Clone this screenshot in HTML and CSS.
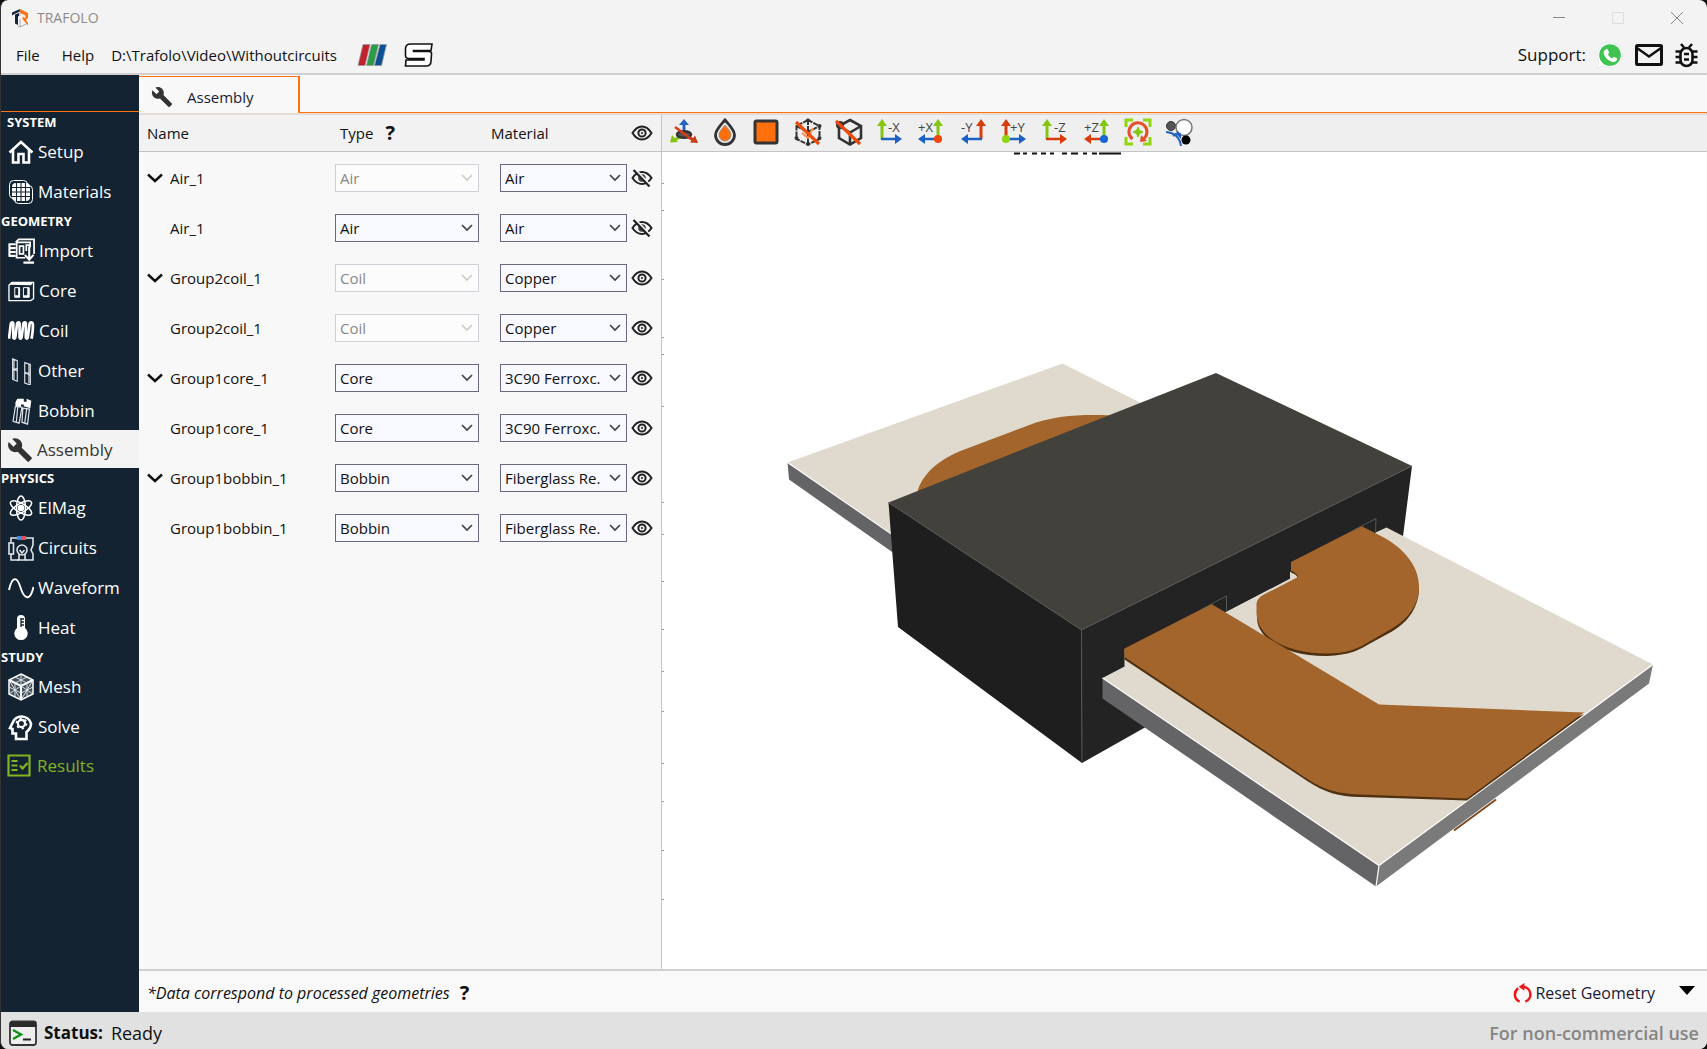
FILE: index.html
```html
<!DOCTYPE html>
<html lang="en">
<head>
<meta charset="utf-8">
<title>TRAFOLO</title>
<link rel="stylesheet" href="styles.css">
</head>
<body>
<svg class="defs" aria-hidden="true">
  <symbol id="eye" viewBox="0 0 22 16"><path d="M1.500 8Q5.500 1.500 11 1.500T20.500 8Q16.500 14.500 11 14.500T1.500 8Z" fill="none" stroke="#222" stroke-width="2"/><circle cx="11" cy="8" r="3.600" fill="none" stroke="#222" stroke-width="2"/><circle cx="11" cy="8" r="1.200" fill="#555"/></symbol>
  <symbol id="eye-off" viewBox="0 0 22 18"><path d="M1.500 9Q5.500 3 11 3T20.500 9Q16.500 15 11 15T1.500 9Z" fill="none" stroke="#222" stroke-width="2"/><circle cx="11" cy="9" r="3.800" fill="#444"/><path d="M4 0 20 17" stroke="#f8f8f8" stroke-width="2"/><path d="M2.500 1 18.500 17.500" stroke="#222" stroke-width="2.200"/></symbol>
  <symbol id="chev" viewBox="0 0 16 10"><path d="M1 1.500 8 8 15 1.500" fill="none" stroke="#111" stroke-width="2.400"/></symbol>
  <symbol id="wrench" viewBox="0 0 24 24"><path d="M22.700 19l-9.100-9.100c.9-2.300.4-5-1.500-6.900-2-2-5-2.400-7.400-1.300L9 6 6 9 1.600 4.700C.4 7.100.9 10.100 2.900 12.100c1.900 1.900 4.600 2.400 6.900 1.500l9.100 9.100c.4.4 1 .4 1.400 0l2.300-2.300c.5-.4.5-1.100.1-1.400z" fill="#333"/></symbol>
</svg>
<div class="window">
  <header class="titlebar">
    <svg class="logo" viewBox="0 0 18 20"><path d="M1 4.500 9 1v2.500L3.500 6 1 7.500zM4 6.500l4-1.500v3L7 8.500V17l-3-1.500z" fill="#14233a"/><path d="M9 1 17 5v5l-2 2 2 3v2.500L11.500 11V9l3 1V7.500L9 5z" fill="#ff7210"/><path d="M9 1v7M9 11v8l7-3.500M7 18l2 1" fill="none" stroke="#999" stroke-width=".8"/></svg>
    <h1>TRAFOLO</h1>
    <div class="caption">
      <button aria-label="Minimize"><svg viewBox="0 0 12 12"><path d="M0 5.500h12" stroke="#888"/></svg></button>
      <button aria-label="Maximize" disabled><svg viewBox="0 0 12 12"><path d="M.5.500h11v11H.5z" fill="none" stroke="#ddd"/></svg></button>
      <button aria-label="Close"><svg viewBox="0 0 12 12"><path d="M0 0l12 12M12 0 0 12" stroke="#888"/></svg></button>
    </div>
  </header>
  <nav class="menubar">
    <button>File</button>
    <button>Help</button>
    <span class="path">D:\Trafolo\Video\Withoutcircuits</span>
    <button class="brand" aria-label="ParaView"><svg width="30" height="22" viewBox="0 0 30 22"><g stroke="#9a9a9a" stroke-width=".8"><path d="M6 .5h7L8 21.500H1z" fill="#c2202c"/><path d="M14.500.500h7l-5 21h-7z" fill="#2b9b48"/><path d="M23 .5h6.500l-5 21h-7z" fill="#0b4f94"/></g></svg></button>
    <button class="brand" aria-label="Solver"><svg width="30" height="24" viewBox="0 0 30 24"><path d="M6.500 1H28l-1 6.500H9.500v1H25q3 0 2.500 3L27 18q0 5-5 5H1.500l.5-6h18v-1.500H5q-3.500 0-3.500-3V6q0-5 5-5z" fill="#fff" stroke="#111" stroke-width="1.600"/></svg></button>
    <span class="support">Support:</span>
    <a href="#whatsapp" aria-label="WhatsApp"><svg width="27" height="27" viewBox="0 0 27 27"><path d="M1 26 3 19A12.500 12.500 0 1 1 8 24z" fill="#fff" stroke="#dfe8e8" stroke-width=".8"/><circle cx="14" cy="13" r="10.800" fill="#3fc351"/><path d="M9.500 7.500q1.500-1.500 2.500.5l1 2.200q.2.800-1.200 2 1.500 3 4.500 4.300 1.200-2 2-1.600l2.300 1.100q1 .5.500 1.700-1.300 2.800-4.300 2.300-6.500-1.300-9-7.800-.8-2.900 1.700-4.700z" fill="#fff"/></svg></a>
    <a href="#mail" aria-label="Mail"><svg width="28" height="22" viewBox="0 0 28 22"><rect x="1.500" y="1.500" width="25" height="19" rx="1" fill="none" stroke="#111" stroke-width="3"/><path d="M2 4l12 8.500L26 4" fill="none" stroke="#111" stroke-width="2.400"/></svg></a>
    <a href="#bug" aria-label="Report a bug"><svg width="23" height="25" viewBox="0 0 23 25"><rect x="5.500" y="5" width="12" height="18" rx="6" fill="none" stroke="#111" stroke-width="2.600"/><path d="M6 1l3 3.500M17 1l-3 3.500M.5 8.500H6M.5 14H5.500M.5 19.500H6M17 8.500h5.500M17.500 14h5M17 19.500h5.500M9 11h5M9 16.500h5" stroke="#111" stroke-width="2.500"/></svg></a>
  </nav>
  <div class="body">
    <nav class="sidebar">
      <div class="side-top"></div>
      <h2 class="first">SYSTEM</h2>
      <a href="#setup"><svg viewBox="0 0 26 26"><path d="M1.500 13.500 13 3l11.500 10.500M5 11v12.500h5.500V15h5v8.500H21V11" fill="none" stroke="#fff" stroke-width="2.600"/></svg>Setup</a>
      <a href="#materials"><svg viewBox="0 0 26 26"><g fill="none" stroke="#fff"><rect x="1.500" y="1.500" width="18" height="18" rx="4"/><rect x="6.500" y="6.500" width="18" height="18" rx="4"/></g><rect x="4" y="4" width="18" height="18" rx="4" fill="#fff"/><path d="M8.500 4v18M13 4v18M17.500 4v18M4 8.500h18M4 13h18M4 17.500h18" stroke="#132332" stroke-width="1.100"/></svg>Materials</a>
      <h2>GEOMETRY</h2>
      <a href="#import"><svg class="wide" viewBox="0 0 28 26"><g fill="none" stroke="#fff" stroke-width="1.800"><path d="M8 4 11 1h16v15M8 4h15v5M8 20h10M9 4v16M12 8h4v8h-4zM19 13V7h4"/><path d="M1 6h7M1 10h7M1 14h7M1 18h7M1.500 5v14" stroke-width="2.200"/><path d="M22 8v13M17.500 17l4.500 5 4.500-5M16 25h11" stroke-width="2.200"/></g></svg>Import</a>
      <a href="#core"><svg class="wide" viewBox="0 0 28 26"><path d="M1 23V7l3-3h22.500v17l-3 2z" fill="none" stroke="#fff" stroke-width="1.400"/><path d="M1.500 6.500 4 4h22l-2 3z" fill="#fff"/><path d="M7 9.500h5v10H7zM16 9.500h6v10h-6z" fill="none" stroke="#fff"/><path d="M10.500 9.500h2v10H7v-2h3.500zM20 9.500h2v10h-6v-2h4z" fill="#fff"/></svg>Core</a>
      <a href="#coil"><svg class="wide" viewBox="0 0 28 26"><path d="M1 21 3 5q2-2 2.500 0L5.500 20q1 2 2 0L9.500 5q2-2 2.500 0l0 15q1 2 2 0L16 5q2-2 2.500 0l0 15q1 2 2 0L22.500 5q2-2 3 0 1 3-1 16" fill="none" stroke="#fff" stroke-width="2.800"/></svg>Coil</a>
      <a href="#other"><svg viewBox="0 0 26 30"><path d="M4 2l5 2v22l-5-2zM17 6l6 2v22l-6-2zM4 14l5-2M4 12l5 3M17 18l6-2M17 16l6 4M5.500 3v21M21.500 8v20" fill="none" stroke="#dfe4e8" stroke-width="1.200"/></svg>Other</a>
      <a href="#bobbin"><svg viewBox="0 0 26 30"><path d="M7 10 14 11 11 28 4.500 26zM15 12l7 1-2 16-6-2zM9.500 11 8 27M19 13l-2 15" fill="none" stroke="#dfe4e8" stroke-width="1.300"/><path d="M7 6 9 2h7v3h3V2l5 2-1 8-7-2V8h-3v3L7 9z" fill="#fff"/></svg>Bobbin</a>
      <a href="#assembly" class="active"><svg><use href="#wrench"/></svg>Assembly</a>
      <h2>PHYSICS</h2>
      <a href="#elmag"><svg viewBox="0 0 26 26"><g fill="none" stroke="#fff" stroke-width="1.500"><ellipse cx="13" cy="13" rx="4.500" ry="12"/><ellipse cx="13" cy="13" rx="4.500" ry="12" transform="rotate(60 13 13)"/><ellipse cx="13" cy="13" rx="4.500" ry="12" transform="rotate(120 13 13)"/></g><circle cx="13" cy="13" r="3.300" fill="#fff"/></svg>ElMag</a>
      <a href="#circuits"><svg viewBox="0 0 26 26"><g fill="none" stroke="#dfe4e8" stroke-width="1.600"><path d="M3 8V3h6M18 3h7v7l-2 5 2 4v6h-7M3 19v6h8"/><rect x="1" y="8" width="4.500" height="11"/><circle cx="14" cy="15" r="5"/><path d="M11 25v-6M17 25v-6M11.500 15l2.500 3 2.500-3M9 25h10"/></g><path d="M9 1h5v4H9z" fill="#3b8ae6"/><path d="M14 1h4v4h-4z" fill="#ee4a56"/></svg>Circuits</a>
      <a href="#waveform"><svg viewBox="0 0 26 26"><path d="M1 15C4 1 9 1 12.500 12.500S22 27 25.500 12" fill="none" stroke="#fff" stroke-width="1.900"/></svg>Waveform</a>
      <a href="#heat"><svg viewBox="0 0 26 26"><path d="M9 4a4 4 0 0 1 8 0v9a6.700 6.700 0 1 1-8 0z" fill="#fff"/><path d="M13 3v9M13 4h3M13 7h3M13 10h3" stroke="#132332" stroke-width="1.300"/></svg>Heat</a>
      <h2>STUDY</h2>
      <a href="#mesh"><svg viewBox="0 0 26 28"><path d="M13 1 25 7v14l-12 6L1 21V7z" fill="#46535f" stroke="#fff" stroke-width="1.500"/><path d="M1 7l12 6 12-6M13 13v14" fill="none" stroke="#fff" stroke-width="2"/><path d="M7 4l12 6M19 4 7 10M13 1v12M1 14l12 6 12-6M7 10v14M19 10v14M1 21 13 13l12 8M1 7l12 20L25 7" fill="none" stroke="#e8ecef" stroke-width=".9"/></svg>Mesh</a>
      <a href="#solve"><svg viewBox="0 0 26 28"><path d="M9 27v-5.500H5.500V17L3 16l2.500-5A9.700 9.700 0 0 1 24 11.500q0 5-4.500 8.500v7z" fill="none" stroke="#fff" stroke-width="2.600" transform="translate(-1 -1)"/><circle cx="13.500" cy="10.500" r="3.600" fill="none" stroke="#fff" stroke-width="2.200"/><circle cx="13.500" cy="10.500" r="5" fill="none" stroke="#fff" stroke-width="1.800" stroke-dasharray="2.200 3.036"/></svg>Solve</a>
      <a href="#results" class="results"><svg viewBox="0 0 26 26"><path d="M1.500 2.500h21v20h-21z" fill="none" stroke="#85b320" stroke-width="2.200"/><path d="M4.500 8h6M4.500 12.500h6M4.500 17h6M13 12.500l2.500 3 5-5.500" fill="none" stroke="#85b320" stroke-width="2.200"/></svg>Results</a>
    </nav>
    <main class="content">
      <div class="tabs">
        <button class="tab"><svg><use href="#wrench"/></svg>Assembly</button>
        <div class="tab-rest"></div>
      </div>
      <div class="work">
        <section class="panel">
          <table>
            <colgroup><col class="c-name"><col class="c-type"><col class="c-mat"><col class="c-eye"><col></colgroup>
            <thead><tr><th class="name">Name</th><th class="type"><div class="with-help">Type<button class="help" aria-label="Help on types">?</button></div></th><th class="mat">Material</th><th class="vis"><button aria-label="Toggle all"><svg class="eye"><use href="#eye"/></svg></button></th><th></th></tr></thead>
            <tbody>
              <tr><td><div class="node"><button class="toggle" aria-label="Collapse"><svg><use href="#chev"/></svg></button>Air_1</div></td><td><select disabled aria-label="Type"><option>Air</option></select></td><td class="mat"><select aria-label="Material"><option>Air</option></select></td><td class="vis"><button aria-label="Show"><svg class="eye off"><use href="#eye-off"/></svg></button></td><td></td></tr>
              <tr><td><div class="node leaf">Air_1</div></td><td><select aria-label="Type"><option>Air</option></select></td><td class="mat"><select aria-label="Material"><option>Air</option></select></td><td class="vis"><button aria-label="Show"><svg class="eye off"><use href="#eye-off"/></svg></button></td><td></td></tr>
              <tr><td><div class="node"><button class="toggle" aria-label="Collapse"><svg><use href="#chev"/></svg></button>Group2coil_1</div></td><td><select disabled aria-label="Type"><option>Coil</option></select></td><td class="mat"><select aria-label="Material"><option>Copper</option></select></td><td class="vis"><button aria-label="Hide"><svg class="eye"><use href="#eye"/></svg></button></td><td></td></tr>
              <tr><td><div class="node leaf">Group2coil_1</div></td><td><select disabled aria-label="Type"><option>Coil</option></select></td><td class="mat"><select aria-label="Material"><option>Copper</option></select></td><td class="vis"><button aria-label="Hide"><svg class="eye"><use href="#eye"/></svg></button></td><td></td></tr>
              <tr><td><div class="node"><button class="toggle" aria-label="Collapse"><svg><use href="#chev"/></svg></button>Group1core_1</div></td><td><select aria-label="Type"><option>Core</option></select></td><td class="mat"><select aria-label="Material"><option>3C90 Ferroxc.</option></select></td><td class="vis"><button aria-label="Hide"><svg class="eye"><use href="#eye"/></svg></button></td><td></td></tr>
              <tr><td><div class="node leaf">Group1core_1</div></td><td><select aria-label="Type"><option>Core</option></select></td><td class="mat"><select aria-label="Material"><option>3C90 Ferroxc.</option></select></td><td class="vis"><button aria-label="Hide"><svg class="eye"><use href="#eye"/></svg></button></td><td></td></tr>
              <tr><td><div class="node"><button class="toggle" aria-label="Collapse"><svg><use href="#chev"/></svg></button>Group1bobbin_1</div></td><td><select aria-label="Type"><option>Bobbin</option></select></td><td class="mat"><select aria-label="Material"><option>Fiberglass Re.</option></select></td><td class="vis"><button aria-label="Hide"><svg class="eye"><use href="#eye"/></svg></button></td><td></td></tr>
              <tr><td><div class="node leaf">Group1bobbin_1</div></td><td><select aria-label="Type"><option>Bobbin</option></select></td><td class="mat"><select aria-label="Material"><option>Fiberglass Re.</option></select></td><td class="vis"><button aria-label="Hide"><svg class="eye"><use href="#eye"/></svg></button></td><td></td></tr>
            </tbody>
          </table>
        </section>
        <section class="viewer">
          <div class="toolbar"><div class="tools">
            <button aria-label="Axes"><svg viewBox="0 0 28 28"><path d="M14 15V5" stroke="#2463c0" stroke-width="3"/><path d="M14 1l5 6H9z" fill="#2463c0"/><path d="M12 18l-8 4" stroke="#84c510" stroke-width="3"/><path d="M16 18l8 4" stroke="#c23f1a" stroke-width="3"/><path d="M0 24.500 2 17l6 7z" fill="#84c510"/><path d="M28 25l-8-.5 5-7z" fill="#c23f1a"/><ellipse cx="14" cy="16.500" rx="7" ry="3.300" fill="#555" stroke="#333" stroke-width="2.500"/><path d="M5 9l19 14" stroke="#d93c16" stroke-width="2.500"/></svg></button>
            <button aria-label="Opacity"><svg viewBox="0 0 28 28"><path d="M14 2C9 8 4.500 12 4.500 17a9.500 9.500 0 0 0 19 0C23.500 12 19 8 14 2z" fill="#eee" stroke="#333" stroke-width="2.800"/><path d="M14 7c-3 4-6 6.500-6 10a6 6 0 0 0 12 0c0-3.500-3-6-6-10z" fill="#ff700d" stroke="#998a80"/></svg></button>
            <button aria-label="Surface"><svg viewBox="0 0 28 28"><rect x="3" y="3" width="22" height="22" rx="1.500" fill="#ff700d" stroke="#333" stroke-width="3"/></svg></button>
            <button aria-label="Hide mesh"><svg viewBox="0 0 28 28"><path d="M14 2 25.500 8v13L14 26.500 2.500 21V8zM2.500 8 14 14l11.500-6M14 14v12M14 2v12" fill="none" stroke="#333" stroke-width="2" stroke-dasharray="5 1"/><path d="M8 15l6 5 5-10" fill="none" stroke="#ff8c4a" stroke-width="2"/><g fill="#333"><circle cx="14" cy="2.500" r="2"/><circle cx="25.500" cy="8" r="2"/><circle cx="25.500" cy="20" r="2"/><circle cx="14" cy="26" r="2"/><circle cx="2.500" cy="20" r="2"/></g><path d="M2 4l23 22" stroke="#f04b0c" stroke-width="3.200"/></svg></button>
            <button aria-label="Hide box"><svg viewBox="0 0 28 28"><path d="M15 2 26 8v12l-11 6.500L4 20V8zM4 8l11 6.500L26 8M15 14.500V26" fill="none" stroke="#333" stroke-width="2.600"/><circle cx="5" cy="7" r="4" fill="#333"/><path d="M1 3l24 23" stroke="#f04b0c" stroke-width="3.200"/></svg></button>
            <button aria-label="View minus X"><svg viewBox="0 0 28 28"><path d="M6 21V7" stroke="#84c510" stroke-width="3"/><path d="M6 1l5 7H1z" fill="#84c510"/><path d="M5 21h14" stroke="#1d61c4" stroke-width="2.500"/><path d="M26 21l-7 5V16z" fill="#1d61c4"/><text x="12" y="14" class="ax">-X</text></svg></button>
            <button aria-label="View plus X"><svg viewBox="0 0 28 28"><path d="M21 21V7" stroke="#84c510" stroke-width="3"/><path d="M21 1l5 7H16z" fill="#84c510"/><path d="M21 21H8" stroke="#1d61c4" stroke-width="2.500"/><path d="M1 21l7 5V16z" fill="#1d61c4"/><circle cx="21" cy="21" r="4" fill="#f5460c"/><text x="1" y="14" class="ax">+X</text></svg></button>
            <button aria-label="View minus Y"><svg viewBox="0 0 28 28"><path d="M22 21V7" stroke="#d93c0c" stroke-width="3"/><path d="M22 1l5 7H17z" fill="#d93c0c"/><path d="M23 21H9" stroke="#1d61c4" stroke-width="2.500"/><path d="M2 21l7 5V16z" fill="#1d61c4"/><text x="2" y="14" class="ax">-Y</text></svg></button>
            <button aria-label="View plus Y"><svg viewBox="0 0 28 28"><path d="M6 21V7" stroke="#d93c0c" stroke-width="3"/><path d="M6 1l5 7H1z" fill="#d93c0c"/><path d="M6 21h13" stroke="#1d61c4" stroke-width="2.500"/><path d="M26 21l-7 5V16z" fill="#1d61c4"/><circle cx="6" cy="21" r="4" fill="#91d410"/><text x="10" y="14" class="ax">+Y</text></svg></button>
            <button aria-label="View minus Z"><svg viewBox="0 0 28 28"><path d="M6 21V7" stroke="#84c510" stroke-width="3"/><path d="M6 1l5 7H1z" fill="#84c510"/><path d="M5 21h14" stroke="#d93c0c" stroke-width="2.500"/><path d="M26 21l-7 5V16z" fill="#d93c0c"/><text x="13" y="14" class="ax">-Z</text></svg></button>
            <button aria-label="View plus Z"><svg viewBox="0 0 28 28"><path d="M21 21V7" stroke="#84c510" stroke-width="3"/><path d="M21 1l5 7H16z" fill="#84c510"/><path d="M21 21H8" stroke="#d93c0c" stroke-width="2.500"/><path d="M1 21l7 5V16z" fill="#d93c0c"/><circle cx="21" cy="21" r="4" fill="#1766d8"/><text x="1" y="14" class="ax">+Z</text></svg></button>
            <button aria-label="Reset view"><svg viewBox="0 0 28 28"><path d="M2 9V2h7M19 2h7v7M26 19v7h-7M9 26H2v-7" fill="none" stroke="#91d410" stroke-width="3"/><path d="M8.500 21a9 9 0 1 1 11.500-.5" fill="none" stroke="#e4502a" stroke-width="3"/><path d="M16 24l1-7 6 6z" fill="#e4502a"/><path d="M14 9l1.500 3.500L19 14l-3.500 1.500L14 19l-1.500-3.500L9 14l3.500-1.500z" fill="#84c510" stroke="#84c510"/></svg></button>
            <button aria-label="Section"><svg viewBox="0 0 28 28"><circle cx="6" cy="8" r="4.500" fill="#555" stroke="#333"/><circle cx="19" cy="9.500" r="8" fill="#fff" stroke="#777" stroke-width="1.500"/><circle cx="21" cy="22" r="4.500" fill="#000"/><path d="M1 14q13 1 15 14M8 18l6-4" fill="none" stroke="#2463c0" stroke-width="2"/><path d="M10 15h6v6z" fill="#2463c0"/></svg></button>
          </div></div>
          <svg class="scene" viewBox="662 151 1045 816" role="img" aria-label="Transformer assembly">
            <path d="M1014 152h6m3 0h4m5 0h5m4 0h5m4 0h4m8 0h5m4 0h7m5 0h4m5 0h5m2 0h22" stroke="#111" stroke-width="2" fill="none"/>
            <path d="M787.500 461 1062.500 362 1160 411 900 540z" fill="#e0dace"/>
            <path d="M787.500 461 900 538v18L789 478z" fill="#646467"/><path d="M787.500 461 895 535" stroke="#fff" stroke-width="1.200"/>
            <path d="M917.500 490C924 468 945 455 967 447L1028 424C1056 413 1085 413 1112 414L1080 440z" fill="#a3652b"/>
            <path d="M888.500 501 1081.500 628.500 1082 761.500 898 625.500z" fill="#1e1e1e"/>
            <path d="M1081.500 628.500 1412 464.500 1403 535 1300 600 1144 726.500 1082 761.500z" fill="#232323"/>
            <path d="M888.500 501 1216 371.500 1412 464.500 1081.500 628.500z" fill="#42413c"/>
            <path d="M888.500 501 1081.500 628.500 1412 464.500M1081.500 628.500 1082 761.500" fill="none" stroke="#555" stroke-width="1"/>
            <path d="M1102.500 676.500 1124.500 665V648L1226.500 610 1290 577V562L1375.500 531 1386.500 526 1653 663 1379 864z" fill="#e0dace"/>
            <path d="M1124.500 648V640L1226.500 590V610L1290 577V561L1376 517V531L1362 538 1291 570 1226 610z" fill="#232323"/>
            <path d="M1102.500 676.500 1379 864 1376 885 1102.500 697z" fill="#646467"/>
            <path d="M1379 864 1653 663 1649 682 1376 885z" fill="#7a7a7a"/>
            <path d="M1102.500 676.500 1379 864 1653 663M1379 864 1376 885" fill="none" stroke="#fff" stroke-width="1.200"/>
            <path d="M1291 563 1291 571Q1297 573 1298 577L1263 595Q1257 598 1257 604V618C1259 640 1290 655 1327 654.500 1350 653.500 1358 649 1370 642L1392 630C1409 620 1419 605 1419 586L1376 533z" fill="#4f3010"/>
            <path d="M1291 560.500 1361.500 524.500 1376 532C1400 543 1419 562 1419 585 1419 603 1409 617 1392 627L1366 642C1355 649 1342 652 1327 652 1290 652 1258 638 1256.500 612V602Q1257 597 1263 593.500L1298 575.500Q1297 571 1291 569z" fill="#a3652b"/>
            <path d="M1124.500 650V658L1308 780C1325 791 1338 795 1360 795.500L1467 799 1584 713 1467 750z" fill="#4f3010"/>
            <path d="M1124.500 647 1211.500 602.500 1379 703 1584 711 1467 797 1360 793C1338 792 1325 789 1308 778L1124.500 655.500z" fill="#a3652b"/>
            <path d="M1200 608.500 1226.500 594.500V610M1350 530.500 1376 517 1375.500 531" fill="none" stroke="#555"/>
            <path d="M1454 829 1496 798" stroke="#80481b" stroke-width="2"/>
            <path d="M662 182h2m-2 27h2m-2 69h2m-2 58h2m-2 17h2m-2 52h2m-2 96h2m-2 32h2m-2 47h2m-2 48h2m-2 42h2m-2 40h2m-2 52h2m-2 38h2m-2 49h2m-2 49h2" stroke="#999"/>
          </svg>
        </section>
      </div>
      <div class="actions">
        <p>*Data correspond to processed geometries</p><button class="help" aria-label="Help on data">?</button>
        <button class="reset"><svg viewBox="0 0 20 22"><path d="M7 19.500A8 8 0 0 1 5.500 5.500M13 19.500A8 8 0 0 0 11 4" fill="none" stroke="#f01414" stroke-width="2.600"/><path d="M12 0v8L6 4z" fill="#f01414"/></svg>Reset Geometry</button>
        <button class="more" aria-label="More"><svg viewBox="0 0 16 9"><path d="M0 0h16L8 9z"/></svg></button>
      </div>
    </main>
  </div>
  <footer class="status">
    <svg viewBox="0 0 28 26"><rect x="1" y="1.500" width="26" height="23.500" rx="2.500" fill="#eee" stroke="#333" stroke-width="1.800"/><path d="M1 2h26v5H1z" fill="#2b2b2b"/><path d="M4 10l8 4.500L4 19" fill="none" stroke="#109018" stroke-width="2.400"/><path d="M14 19.500h8" stroke="#222" stroke-width="1.800"/></svg>
    <strong>Status:</strong><span class="state">Ready</span><span class="licence">For non-commercial use</span>
  </footer>
</div>
</body>
</html>
```
FILE: styles.css
```css
* { box-sizing: border-box; }
body { margin: 0; background: #111; color: #111; font-family: "Open Sans", "Noto Sans", sans-serif; font-size: 15px; line-height: 20px; }
button { border: 0; padding: 0; background: none; color: inherit; font: inherit; }
a { color: inherit; text-decoration: none; }
svg { display: block; flex: none; }
.defs { display: none; }
.window { display: flex; flex-direction: column; min-height: 100vh; border-left: 1px solid #333; border-radius: 8px; overflow: hidden; background: #f3f3f3; }

.titlebar { display: flex; align-items: center; height: 36px; padding-left: 10px; gap: 8px; }
.titlebar h1 { margin: 0; font-size: 14px; font-weight: 400; color: #8b8b8b; }
.logo { width: 18px; height: 20px; }
.caption { display: flex; margin-left: auto; gap: 47px; padding-right: 24px; }
.caption svg { width: 12px; height: 12px; }

.menubar { display: flex; align-items: center; height: 39px; padding: 1px 9px 0 15px; border-bottom: 2px solid #d0d0d0; }
.menubar button { margin-right: 22px; }
.menubar button:nth-child(2) { margin-right: 17px; }
.menubar .path { margin-right: 20px; }
.menubar .brand { margin-right: 17px; }
.support { margin-left: auto; margin-right: 10px; font-size: 17px; }
.menubar a { margin-right: 12px; }
.menubar a:last-child { margin-right: 0; }

.body { display: flex; flex: 1; }
.sidebar { width: 138px; flex: none; background: #132332; color: #fff; font-size: 17px; }
.side-top { height: 37px; border-bottom: 1px solid #ff7210; }
.sidebar h2 { margin: 0; height: 19px; font-size: 13px; line-height: 21px; font-weight: 700; }
.sidebar h2.first { padding-left: 6px; }
.sidebar a { display: flex; align-items: center; gap: 4px; height: 40px; padding: 2px 0 0 7px; }
.sidebar svg { width: 26px; height: 28px; }
.sidebar .wide { width: 27px; }
.sidebar .active, .sidebar .results { height: 38px; padding-left: 6px; }
.sidebar .active { background: #f3f3f3; color: #333; }
.sidebar .results { color: #85b320; }

.content { display: flex; flex-direction: column; flex: 1; min-width: 0; background: #f8f8f8; }
.tabs { display: flex; height: 40px; padding-top: 1px; border-bottom: 2px solid #e5dcd6; }
.tab { display: flex; align-items: center; gap: 14px; width: 161px; padding: 3px 0 0 12px; border-top: 1px solid #ff7210; border-right: 2px solid #ff7210; color: #1a1a35; }
.tab svg { width: 22px; height: 24px; }
.tab-rest { flex: 1; border-bottom: 1px solid #ff7210; }

.work { display: flex; flex: 1; }
.panel { width: 523px; flex: none; border-right: 1px solid #c4c4c4; }
table { width: 100%; table-layout: fixed; border-collapse: separate; border-spacing: 0; }
.c-name { width: 196px; }
.c-type { width: 148px; }
.c-mat { width: 144px; }
.c-eye { width: 30px; }
th { height: 37px; padding: 0; background: #f2f2f2; border-bottom: 1px solid #c4c4c4; text-align: left; font-weight: 400; }
th.name { padding-left: 8px; }
th.type { padding-left: 5px; }
th.mat { padding-left: 8px; }
td { height: 50px; padding: 2px 0 0; }
td.mat { padding-left: 17px; }
.with-help { display: flex; align-items: center; gap: 12px; }
.node { display: flex; align-items: center; gap: 7px; padding-left: 8px; }
.leaf { padding-left: 31px; }
.toggle svg { width: 16px; height: 10px; }
.vis button { display: block; margin: 0 auto; }
.eye { width: 22px; height: 16px; }
.eye.off { height: 18px; }
.help { font-size: 20px; font-weight: 700; }
select { display: block; appearance: none; height: 28px; width: 144px; margin: 0; padding: 0 22px 0 4px; border: 1px solid #6c6884; border-radius: 0; background: #f8f8ff url("data:image/svg+xml,%3Csvg xmlns='http://www.w3.org/2000/svg' width='12' height='8'%3E%3Cpath d='M1 1l5 5 5-5' fill='none' stroke='%23444' stroke-width='1.700'/%3E%3C/svg%3E") no-repeat right 5px center; color: #111; font: inherit; }
.mat select { width: 127px; }
select:disabled { border-color: #d0d0d8; background-color: #fcfcfc; background-image: url("data:image/svg+xml,%3Csvg xmlns='http://www.w3.org/2000/svg' width='12' height='8'%3E%3Cpath d='M1 1l5 5 5-5' fill='none' stroke='%23ccc' stroke-width='1.700'/%3E%3C/svg%3E"); color: #888; opacity: 1; }

.viewer { display: flex; flex-direction: column; flex: 1; min-width: 0; background: #fff; }
.toolbar { height: 37px; background: #efefef; border-bottom: 1px solid #c4c4c4; }
.tools { display: grid; grid-template-columns: repeat(13, 1fr); align-items: center; max-width: 538px; height: 34px; padding-left: 1px; }
.tools svg { width: 28px; height: 28px; margin: 0 auto; }
.ax { font-size: 13px; fill: #444; }
.scene { flex: 1 1 0; width: 100%; min-height: 0; }

.actions { display: flex; align-items: center; height: 43px; padding: 3px 12px 0 8px; border-top: 2px solid #d0d0d0; background: #f9f9f9; font-size: 16px; }
.actions p { margin: 0; font-style: italic; }
.actions .help { margin-left: 10px; }
.reset { display: flex; align-items: center; gap: 3px; margin-left: auto; color: #1a1a35; }
.reset svg { width: 19px; height: 21px; }
.more { margin-left: 24px; padding-bottom: 5px; }
.more svg { width: 16px; height: 9px; }

.status { display: flex; align-items: center; height: 37px; padding: 4px 8px 0; background: #e1e1e1; font-size: 17px; }
.status svg { width: 28px; height: 26px; margin-right: 7px; }
.status strong { margin-right: 8px; }
.state, .licence { font-size: 18px; }
.licence { margin-left: auto; color: #858585; font-weight: 600; }
```
